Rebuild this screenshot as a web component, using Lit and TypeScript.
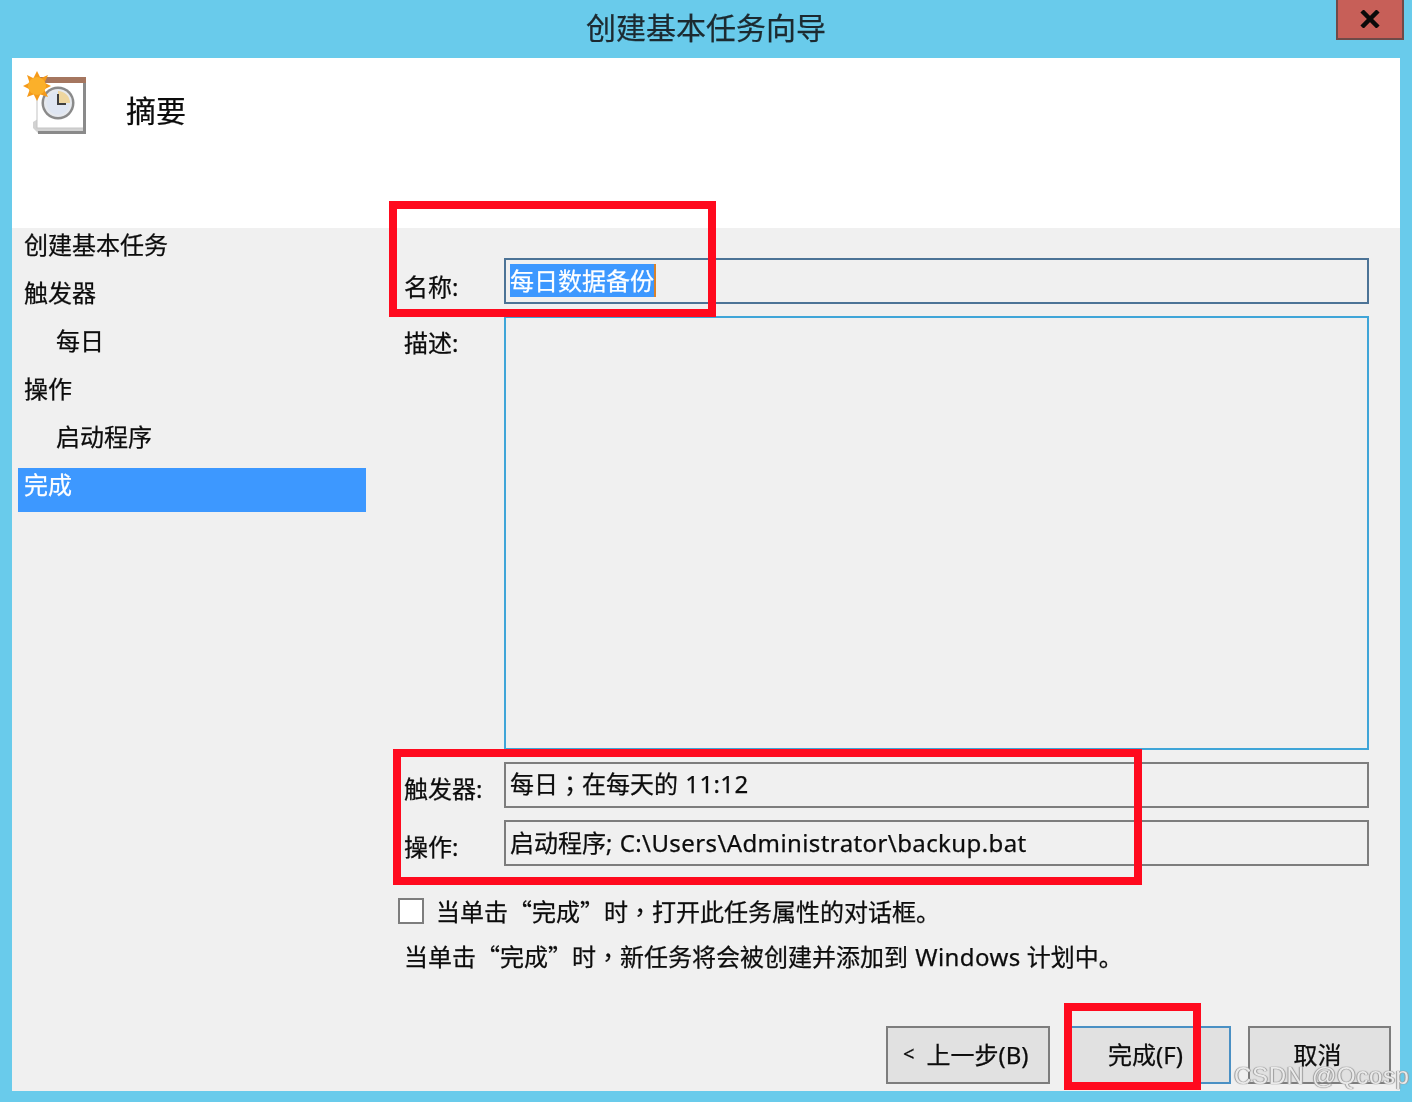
import { LitElement, html, css } from "lit";
import { customElement } from "lit/decorators.js";

@customElement("app-root")
export class AppRoot extends LitElement {
  static styles = css`
    :host {
      display: block;
      width: 1412px;
      height: 1102px;
      font-family: "Noto Sans", "Noto Sans CJK SC", sans-serif;
      font-size: 24px;
      color: #0c0c0c;
      -webkit-text-stroke: 0.25px currentColor;
    }
    * { box-sizing: border-box; }
    .cjk { font-family: "Noto Sans CJK SC", sans-serif; }
    .punct { font-family: "Noto Sans CJK TC", sans-serif; }
    .latin { letter-spacing: 0.4px; margin-left: 1px; }
    .window {
      position: relative;
      width: 100%;
      height: 100%;
      background: #69cbeb;
      display: flex;
      flex-direction: column;
      padding: 0 12px 11px;
      overflow: hidden;
      filter: blur(0.45px);
    }
    .titlebar {
      height: 58px;
      flex: none;
      display: flex;
      justify-content: center;
      font-size: 30px;
      line-height: 56px;
      color: #1c2a30;
    }
    .close {
      position: absolute;
      left: 1336px;
      top: 0;
      width: 68px;
      height: 40px;
      background: #c75f58;
      border: 2px solid #6f4a48;
      border-top: 0;
      display: flex;
      align-items: center;
      justify-content: center;
    }
    .panel {
      flex: 1;
      min-height: 0;
      display: flex;
      flex-direction: column;
      background: #f0f0f0;
    }
    .header {
      height: 170px;
      flex: none;
      background: #fff;
      display: flex;
      align-items: flex-start;
      padding: 12px 0 0 11px;
    }
    .header svg { flex: none; display: block; }
    .header h1 {
      margin: 17px 0 0 39px;
      font-size: 30px;
      font-weight: 400;
      line-height: 48px;
    }
    .body {
      flex: 1;
      min-height: 0;
      display: flex;
    }
    .nav {
      width: 354px;
      flex: none;
      padding-left: 6px;
      display: flex;
      flex-direction: column;
      gap: 4px;
    }
    .nav-item {
      height: 44px;
      line-height: 34px;
      padding-left: 6px;
    }
    .nav-item.sub { padding-left: 38px; }
    .nav-item.active { background: #3d98ff; color: #fff; }
    .form {
      flex: 1;
      display: flex;
      flex-direction: column;
      padding: 30px 9px 7px 38px;
    }
    .grid {
      display: grid;
      grid-template-columns: 100px 865px;
      grid-template-rows: 46px 434px 46px 46px;
      row-gap: 12px;
    }
    .label { line-height: 36px; padding-top: 9px; white-space: nowrap; }
    .label.first { padding-top: 11px; }
    .field {
      border: 2px solid #7d7d7d;
      line-height: 36px;
      padding: 3px 4px;
      white-space: nowrap;
      overflow: hidden;
    }
    .field.tight { padding-top: 1px; }
    .field.name { border-color: #4c7396; }
    .field.desc { border-color: #3fa5d8; }
    .sel {
      display: inline-block;
      background: #3d98ff;
      color: #fff;
      height: 33px;
      line-height: 33px;
      border-right: 2px solid #d9822b;
    }
    .check-row {
      display: flex;
      align-items: center;
      gap: 12px;
      margin: 32px 0 0 -6px;
      height: 26px;
      line-height: 20px;
    }
    .box {
      width: 26px;
      height: 26px;
      flex: none;
      background: #fff;
      border: 2px solid #7d7d7d;
    }
    .note {
      margin-top: 14px;
      line-height: 36px;
      white-space: nowrap;
    }
    .buttons {
      margin-top: auto;
      display: flex;
      padding-left: 482px;
    }
    .btn {
      height: 58px;
      background: #e1e1e1;
      border: 2px solid #7d7d7d;
      display: flex;
      align-items: center;
      justify-content: center;
      white-space: nowrap;
      padding-bottom: 4px;
    }
    .back { width: 164px; margin-right: 18px; justify-content: flex-start; padding-left: 15px; }
    .lt { font-size: 20px; margin-right: 12px; }
    .finish { width: 163px; margin-right: 17px; border-color: #4a90c4; padding-right: 8px; }
    .cancel { width: 143px; padding-right: 4px; }
    .mark {
      position: absolute;
      border: 8px solid #ff0a1e;
      pointer-events: none;
    }
    .m1 { left: 389px; top: 201px; width: 327px; height: 116px; }
    .m2 { left: 393px; top: 749px; width: 749px; height: 136px; }
    .m3 { left: 1064px; top: 1003px; width: 137px; height: 87px; }
    .watermark {
      position: absolute;
      left: 1234px;
      top: 1058px;
      font-family: "Liberation Sans", sans-serif;
      font-size: 24px;
      letter-spacing: 0.65px;
      line-height: 36px;
      white-space: nowrap;
      -webkit-text-stroke: 0;
      color: rgba(244, 244, 244, 0.9);
      text-shadow: 0 0 1px #8a8a8a, 1px 0 1px #a0a0a0, -1px 0 1px #a0a0a0;
    }
  `;

  private icon() {
    return html`<svg width="64" height="66" viewBox="0 0 64 66">
      <path d="M10 52 L15 49 V58 H60 V63 H15 L10 58 Z" fill="#d2d2d2" />
      <rect x="14" y="8" width="47" height="50" fill="#fff" stroke="#c4c4c4" stroke-width="1" />
      <rect x="60" y="7" width="3" height="57" fill="#8a8a8a" />
      <rect x="15" y="61" width="48" height="3" fill="#8a8a8a" />
      <rect x="16" y="7" width="47" height="6" fill="#a5765f" />
      <circle cx="35" cy="33" r="16.5" fill="#8a8a8a" />
      <circle cx="35" cy="33" r="14" fill="#e6e9ee" />
      <circle cx="35" cy="33" r="11.5" fill="#dfe6f2" />
      <path d="M35 33 V21 A12 12 0 0 1 47 33 Z" fill="#eed6a0" />
      <path d="M35 24 V34 H43" fill="none" stroke="#3e3e3e" stroke-width="2" />
      <g fill="#f59a1a">
        <path d="M14 1 L18 9 L10 9 Z" />
        <path d="M14 31 L18 23 L10 23 Z" />
        <path d="M0 16 L8 12 L8 20 Z" />
        <path d="M28 16 L20 12 L20 20 Z" />
        <path d="M4 5 L12 9 L7 14 Z" />
        <path d="M25 5 L16 9 L21 14 Z" />
        <path d="M4 27 L7 19 L12 24 Z" />
        <path d="M25 27 L21 19 L16 24 Z" />
      </g>
      <circle cx="14" cy="16" r="9" fill="#fbb02a" />
    </svg>`;
  }

  render() {
    return html`
      <div class="window">
        <div class="titlebar">创建基本任务向导</div>
        <div class="close">
          <svg width="20" height="18" viewBox="0 0 20 18">
            <path d="M2 1 L18 17 M18 1 L2 17" stroke="#0a0a0a" stroke-width="4.5" fill="none" />
          </svg>
        </div>
        <div class="panel">
          <div class="header">
            ${this.icon()}
            <h1>摘要</h1>
          </div>
          <div class="body">
            <div class="nav">
              <div class="nav-item">创建基本任务</div>
              <div class="nav-item">触发器</div>
              <div class="nav-item sub">每日</div>
              <div class="nav-item">操作</div>
              <div class="nav-item sub">启动程序</div>
              <div class="nav-item active">完成</div>
            </div>
            <div class="form">
              <div class="grid">
                <div class="label first">名称:</div>
                <div class="field name"><span class="sel">每日数据备份</span></div>
                <div class="label">描述:</div>
                <div class="field desc"></div>
                <div class="label">触发器:</div>
                <div class="field tight">每日<span class="punct">；</span>在每天的 <span class="latin">11:12</span></div>
                <div class="label">操作:</div>
                <div class="field">启动程序; <span class="latin">C:\\Users\\Administrator\\backup.bat</span></div>
              </div>
              <div class="check-row">
                <div class="box"></div>
                <div>当单击<span class="cjk">“</span>完成<span class="cjk">”</span>时<span class="punct">，</span>打开此任务属性的对话框。</div>
              </div>
              <div class="note">当单击<span class="cjk">“</span>完成<span class="cjk">”</span>时<span class="punct">，</span>新任务将会被创建并添加到 <span class="latin">Windows</span> 计划中。</div>
              <div class="buttons">
                <div class="btn back"><span class="lt">&lt;</span>上一步(B)</div>
                <div class="btn finish">完成(F)</div>
                <div class="btn cancel">取消</div>
              </div>
            </div>
          </div>
        </div>
        <div class="mark m1"></div>
        <div class="mark m2"></div>
        <div class="mark m3"></div>
        <div class="watermark">CSDN @Qcosp</div>
      </div>
    `;
  }
}
